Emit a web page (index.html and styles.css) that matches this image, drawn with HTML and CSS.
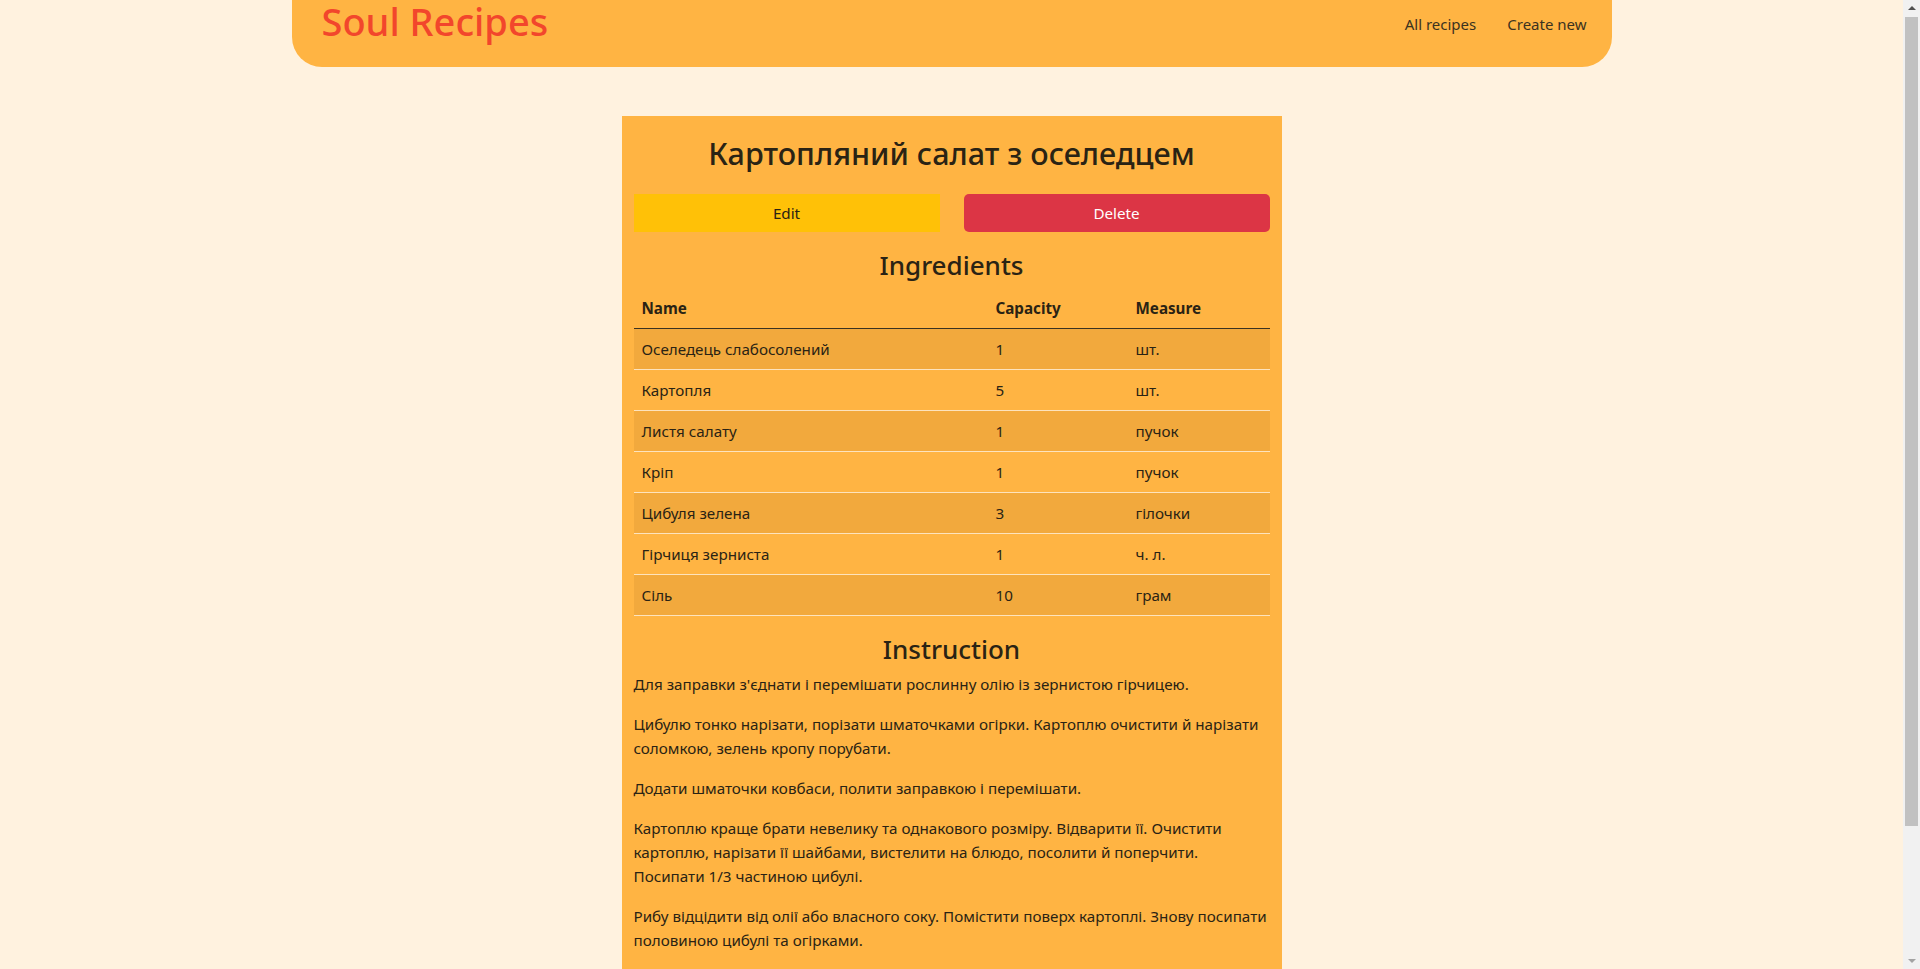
FILE: index.html
```html
<!DOCTYPE html>
<html lang="uk">
<head>
<meta charset="utf-8">
<title>Soul Recipes</title>
<link rel="stylesheet" href="styles.css">
</head>
<body>
<header class="topbar">
  <a class="brand" href="#">Soul Recipes</a>
  <nav class="nav">
    <a class="nav-link" href="#">All recipes</a>
    <a class="nav-link" href="#">Create new</a>
  </nav>
</header>
<main class="recipe">
  <h1 class="recipe-title">Картопляний салат з оселедцем</h1>
  <div class="actions">
    <button class="btn btn-edit">Edit</button>
    <button class="btn btn-delete">Delete</button>
  </div>
  <h2 class="section-title">Ingredients</h2>
  <table class="ingredients">
    <thead>
      <tr><th class="col-name">Name</th><th class="col-cap">Capacity</th><th>Measure</th></tr>
    </thead>
    <tbody>
      <tr><td>Оселедець слабосолений</td><td>1</td><td>шт.</td></tr>
      <tr><td>Картопля</td><td>5</td><td>шт.</td></tr>
      <tr><td>Листя салату</td><td>1</td><td>пучок</td></tr>
      <tr><td>Кріп</td><td>1</td><td>пучок</td></tr>
      <tr><td>Цибуля зелена</td><td>3</td><td>гілочки</td></tr>
      <tr><td>Гірчиця зерниста</td><td>1</td><td>ч. л.</td></tr>
      <tr><td>Сіль</td><td>10</td><td>грам</td></tr>
    </tbody>
  </table>
  <h2 class="section-title">Instruction</h2>
  <div class="instruction">
    <p>Для заправки з'єднати і перемішати рослинну олію із зернистою гірчицею.</p>
    <p>Цибулю тонко нарізати, порізати шматочками огірки. Картоплю очистити й нарізати соломкою, зелень кропу порубати.</p>
    <p>Додати шматочки ковбаси, полити заправкою і перемішати.</p>
    <p>Картоплю краще брати невелику та однакового розміру. Відварити її. Очистити картоплю, нарізати її шайбами, вистелити на блюдо, посолити й поперчити.<br>Посипати 1/3 частиною цибулі.</p>
    <p>Рибу відцідити від олії або власного соку. Помістити поверх картоплі. Знову посипати половиною цибулі та огірками.</p>
  </div>
</main>
<div class="scrollbar" aria-hidden="true">
  <span class="arrow arrow-up"></span>
  <span class="thumb"></span>
  <span class="arrow arrow-down"></span>
</div>
</body>
</html>
```
FILE: styles.css
```css
html, body {
  margin: 0;
  padding: 0;
}
body {
  background: #fff2df;
  color: #2a2314;
  font-family: "Noto Sans", "Open Sans", sans-serif;
  font-size: 15.2px;
  line-height: 24px;
  padding-right: 17px;
  min-height: 1120px;
  box-sizing: border-box;
}
a {
  text-decoration: none;
}
.topbar {
  width: 1320px;
  height: 67px;
  margin: 0 auto;
  box-sizing: border-box;
  background: #ffb443;
  border-radius: 0 0 30px 30px;
  display: flex;
  justify-content: space-between;
  align-items: flex-start;
  padding: 0 25px 0 30px;
}
.brand {
  color: #f2462c;
  font-size: 38px;
  line-height: 42px;
  font-weight: 500;
}
.nav {
  display: flex;
  gap: 31px;
  margin-top: 12px;
}
.nav-link {
  color: #3b3220;
  font-size: 15px;
  line-height: 24px;
}
.recipe {
  width: 660px;
  box-sizing: border-box;
  margin: 49px auto 0;
  padding: 12px;
  background: #ffb443;
}
.recipe-title {
  margin: 6px 0 22px;
  text-align: center;
  font-size: 30.5px;
  line-height: 38px;
  font-weight: 500;
}
.actions {
  display: grid;
  grid-template-columns: 1fr 1fr;
  gap: 24px;
}
.btn {
  height: 38px;
  border: none;
  font-family: inherit;
  font-size: 15.2px;
  cursor: pointer;
}
.btn-edit {
  background: #ffc107;
  color: #2a2314;
  border-radius: 0;
}
.btn-delete {
  background: #dc3545;
  color: #fff;
  border-radius: 5px;
}
.section-title {
  margin: 16px 0 6px;
  text-align: center;
  font-size: 26px;
  line-height: 34px;
  font-weight: 500;
}
.ingredients {
  width: 100%;
  border-collapse: collapse;
  margin-bottom: 16px;
}
.ingredients th,
.ingredients td {
  text-align: left;
  padding: 8px;
  line-height: 24px;
}
.ingredients th {
  font-weight: 700;
  border-bottom: 1px solid #3b3220;
}
.ingredients td {
  border-bottom: 1px solid #fde3bd;
}
.ingredients tbody tr:nth-child(odd) td {
  background: #f2a93d;
}
.col-name {
  width: 338px;
}
.col-cap {
  width: 124px;
}
.instruction p {
  margin: 0 0 16px;
}
.scrollbar {
  position: fixed;
  top: 0;
  right: 0;
  bottom: 0;
  width: 17px;
  background: #f1f1f1;
  display: flex;
  flex-direction: column;
  align-items: center;
}
.arrow {
  width: 0;
  height: 0;
  border-left: 4px solid transparent;
  border-right: 4px solid transparent;
  margin: 6px 0;
}
.arrow-up {
  border-bottom: 4px solid #505050;
}
.arrow-down {
  border-top: 4px solid #a3a3a3;
  margin-top: auto;
}
.thumb {
  width: 13px;
  height: 809px;
  margin-top: 1px;
  background: #c1c1c1;
}
```
